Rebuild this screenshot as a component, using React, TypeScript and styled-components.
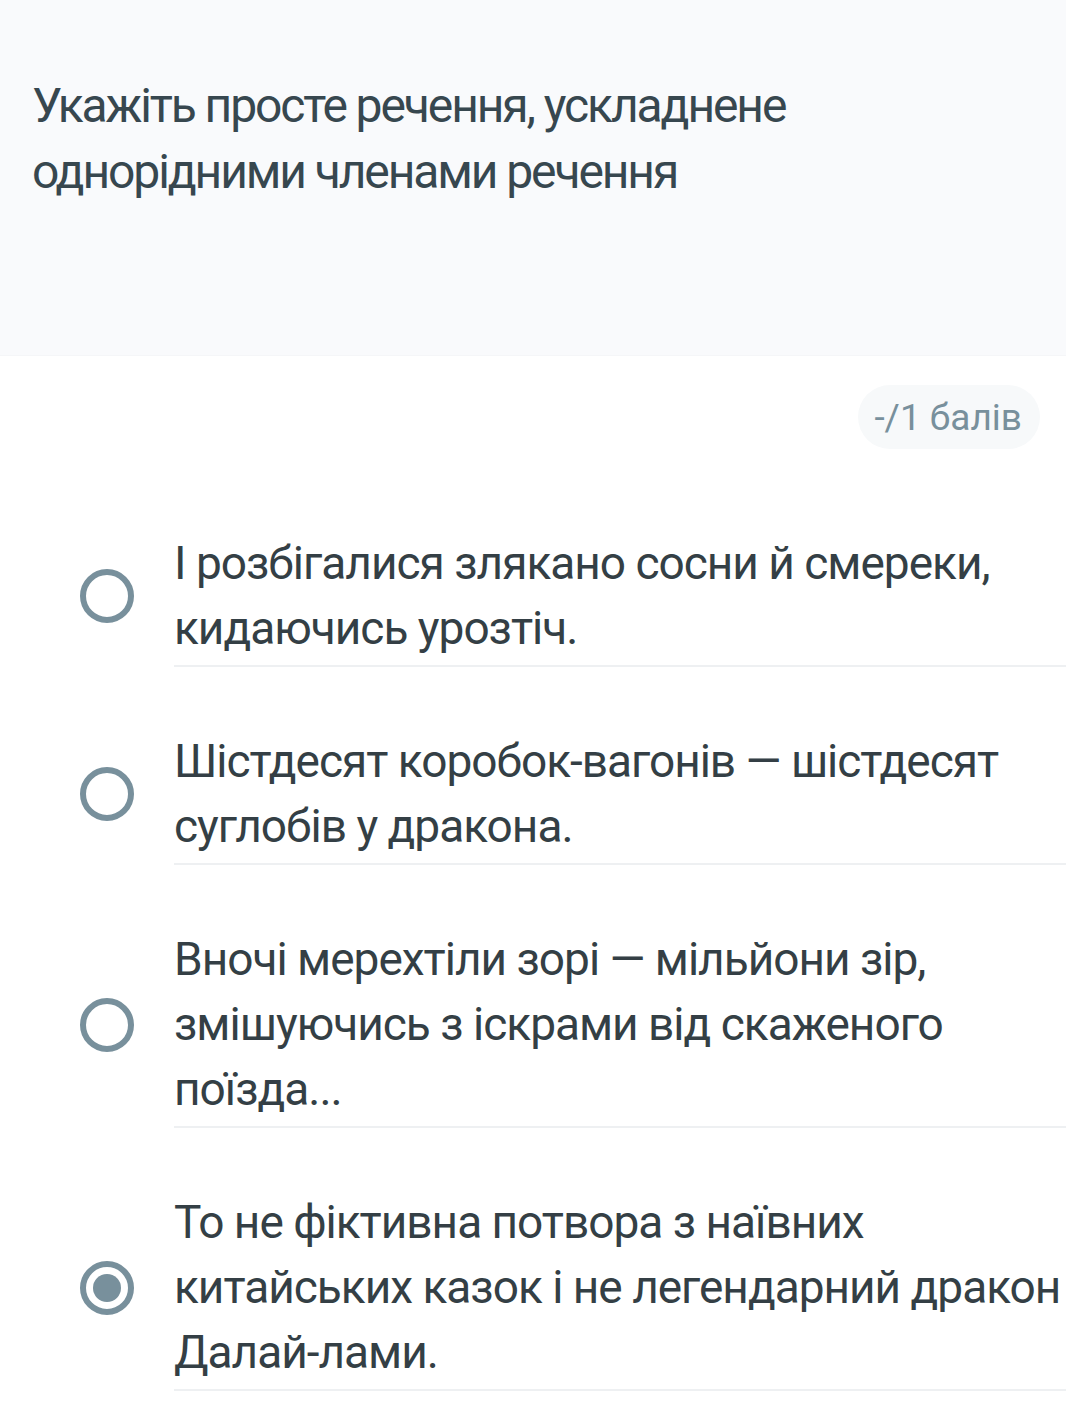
import React, { useState } from "react";
import styled, { createGlobalStyle } from "styled-components";

const GlobalStyle = createGlobalStyle`
  html, body {
    margin: 0;
    padding: 0;
    background: #ffffff;
    font-family: Roboto, "Noto Sans", "Liberation Sans", sans-serif;
  }
  * {
    box-sizing: border-box;
  }
`;

const Page = styled.div`
  width: 1066px;
  height: 1418px;
  overflow: hidden;
  background: #ffffff;
`;

const QuestionPanel = styled.div`
  background: #f9fafc;
  height: 356px;
  padding: 73px 32px 0;
  border-bottom: 1px solid #f5f6f8;
`;

const QuestionText = styled.div`
  font-size: 48px;
  line-height: 66px;
  color: #37474f;
  letter-spacing: -2.1px;
  max-width: 800px;
`;

const ScoreRow = styled.div`
  display: flex;
  justify-content: flex-end;
  padding: 29px 26px 0 0;
`;

const ScoreBadge = styled.div`
  height: 64px;
  display: flex;
  align-items: center;
  padding: 0 18px 0 16px;
  border-radius: 32px;
  background: #f7f9fa;
  color: #78909c;
  font-size: 37px;
`;

const OptionList = styled.div`
  display: flex;
  flex-direction: column;
  margin-top: 20px;
`;

const OptionRow = styled.label`
  display: flex;
  align-items: center;
  cursor: pointer;
`;

const RadioCell = styled.div`
  width: 174px;
  flex-shrink: 0;
  display: flex;
  align-items: center;
  padding-left: 80px;
  padding-top: 56px;
`;

const Radio = styled.span<{ checked?: boolean }>`
  width: 54px;
  height: 54px;
  border-radius: 50%;
  border: 6px solid #78909c;
  display: flex;
  align-items: center;
  justify-content: center;

  &::after {
    content: "";
    width: 28px;
    height: 28px;
    border-radius: 50%;
    background: #78909c;
    display: ${(props) => (props.checked ? "block" : "none")};
  }
`;

const OptionText = styled.div`
  flex: 1;
  padding: 62px 0 4px;
  border-bottom: 2px solid #eef0f2;
  font-size: 46px;
  line-height: 65px;
  letter-spacing: -1px;
  color: #343f45;
`;

const options = [
  "І розбігалися злякано сосни й смереки, кидаючись урозтіч.",
  "Шістдесят коробок-вагонів — шістдесят суглобів у дракона.",
  "Вночі мерехтіли зорі — мільйони зір, змішуючись з іскрами від скаженого поїзда...",
  "То не фіктивна потвора з наївних китайських казок і не легендарний дракон Далай-лами.",
];

export default function App() {
  //вибрана відповідь
  const [selected, setSelected] = useState<number>(3);

  return (
    <>
      <GlobalStyle />
      <Page>
        <QuestionPanel>
          <QuestionText>
            Укажіть просте речення, ускладнене однорідними членами речення
          </QuestionText>
        </QuestionPanel>

        <ScoreRow>
          <ScoreBadge>-/1 балів</ScoreBadge>
        </ScoreRow>

        <OptionList>
          {options.map((text, i) => (
            <OptionRow key={i} onClick={() => setSelected(i)}>
              <RadioCell>
                <Radio checked={selected === i} />
              </RadioCell>
              <OptionText>{text}</OptionText>
            </OptionRow>
          ))}
        </OptionList>
      </Page>
    </>
  );
}
